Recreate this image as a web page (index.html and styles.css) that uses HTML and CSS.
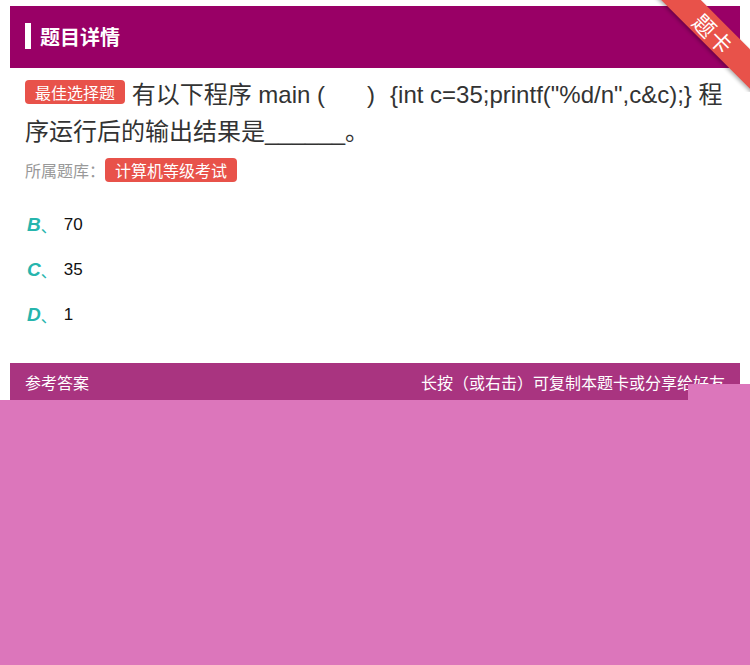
FILE: index.html
```html
<!DOCTYPE html>
<html>
<head>
<meta charset="utf-8">
<link rel="stylesheet" href="styles.css">
</head>
<body>
<div class="page">
  <div class="card">
    <div class="head">
      <span class="mark"></span>
      <span class="title">题目详情</span>
    </div>
    <div class="ribbon"><span>题卡</span></div>
    <div class="body">
      <div class="question"><span class="tag">最佳选择题</span> 有以下程序 main (<span class="gap"></span>)<span class="gap2"></span>{int c=35;printf("%d/n",c&amp;c);} 程序运行后的输出结果是______。</div>
      <div class="bank">所属题库：<span class="tag tag2">计算机等级考试</span></div>
      <div class="options">
        <div class="opt"><span class="letter">B</span><span class="sep">、</span><span class="val">70</span></div>
        <div class="opt"><span class="letter">C</span><span class="sep">、</span><span class="val">35</span></div>
        <div class="opt"><span class="letter">D</span><span class="sep">、</span><span class="val">1</span></div>
      </div>
    </div>
    <div class="answer">
      <span>参考答案</span>
      <span>长按（或右击）可复制本题卡或分享给好友</span>
    </div>
  </div>
  <div class="mask"></div>
  <div class="mask-tab"></div>
</div>
</body>
</html>
```
FILE: styles.css
```css
* { box-sizing: border-box; }
html, body { margin: 0; padding: 0; background: #fff; }
body {
  font-family: "Liberation Sans", Arial, "Noto Sans CJK SC", sans-serif;
  width: 750px;
  height: 665px;
  overflow: hidden;
}
.page { position: relative; width: 750px; height: 665px; overflow: hidden; }
.card { margin: 6px 10px 0; position: relative; }
.head {
  height: 62px;
  background: #990066;
  display: flex;
  align-items: center;
  padding-left: 15px;
  padding-bottom: 2px;
}
.mark { width: 6px; height: 26px; background: #fff; margin-right: 9px; }
.title { color: #fff; font-size: 20px; font-weight: bold; font-family: "Noto Sans CJK SC", sans-serif; }
.ribbon {
  position: absolute;
  top: -6px;
  right: -10px;
  width: 110px;
  height: 92px;
  overflow: hidden;
}
.ribbon span {
  position: absolute;
  top: 19px;
  left: -6px;
  width: 160px;
  height: 28px;
  line-height: 28px;
  background: #e8524a;
  color: #fff;
  text-align: center;
  font-size: 22px;
  font-family: "Noto Sans CJK SC", sans-serif;
  transform: rotate(45deg);
  box-shadow: 0 2px 4px rgba(0,0,0,0.3);
  letter-spacing: 1px;
}
.body { padding: 8px 15px 0; }
.question {
  font-size: 24px;
  line-height: 37px;
  color: #333;
}
.gap { display: inline-block; width: 42px; }
.gap2 { display: inline-block; width: 15px; }
.tag {
  display: inline-block;
  background: #e8524a;
  color: #fff;
  font-size: 16px;
  line-height: 24px;
  height: 24px;
  padding: 0 10px;
  border-radius: 4px;
  vertical-align: 4px;
  font-family: "Noto Sans CJK SC", sans-serif;
}
.bank {
  margin-top: 8px;
  font-size: 16px;
  color: #999;
  line-height: 24px;
  font-family: "Noto Sans CJK SC", sans-serif;
}
.tag2 { vertical-align: 0; }
.options { padding: 20px 0 26px 2px; }
.opt { height: 45px; display: flex; align-items: center; }
.letter { color: #26b5ad; font-weight: bold; font-style: italic; font-size: 19px; }
.sep { color: #26b5ad; font-size: 16px; width: 23px; font-family: "Noto Sans CJK SC", sans-serif; }
.val { color: #111; font-size: 17px; }
.answer {
  height: 37px;
  background: #a93480;
  display: flex;
  justify-content: space-between;
  align-items: center;
  padding: 0 15px;
  color: #fff;
  font-size: 16px;
  font-family: "Noto Sans CJK SC", sans-serif;
}
.mask {
  position: absolute;
  left: 0;
  top: 400px;
  width: 750px;
  height: 265px;
  background: #dc76bb;
}
.mask-tab {
  position: absolute;
  left: 688px;
  top: 384px;
  width: 62px;
  height: 16px;
  background: #dc76bb;
}
```
